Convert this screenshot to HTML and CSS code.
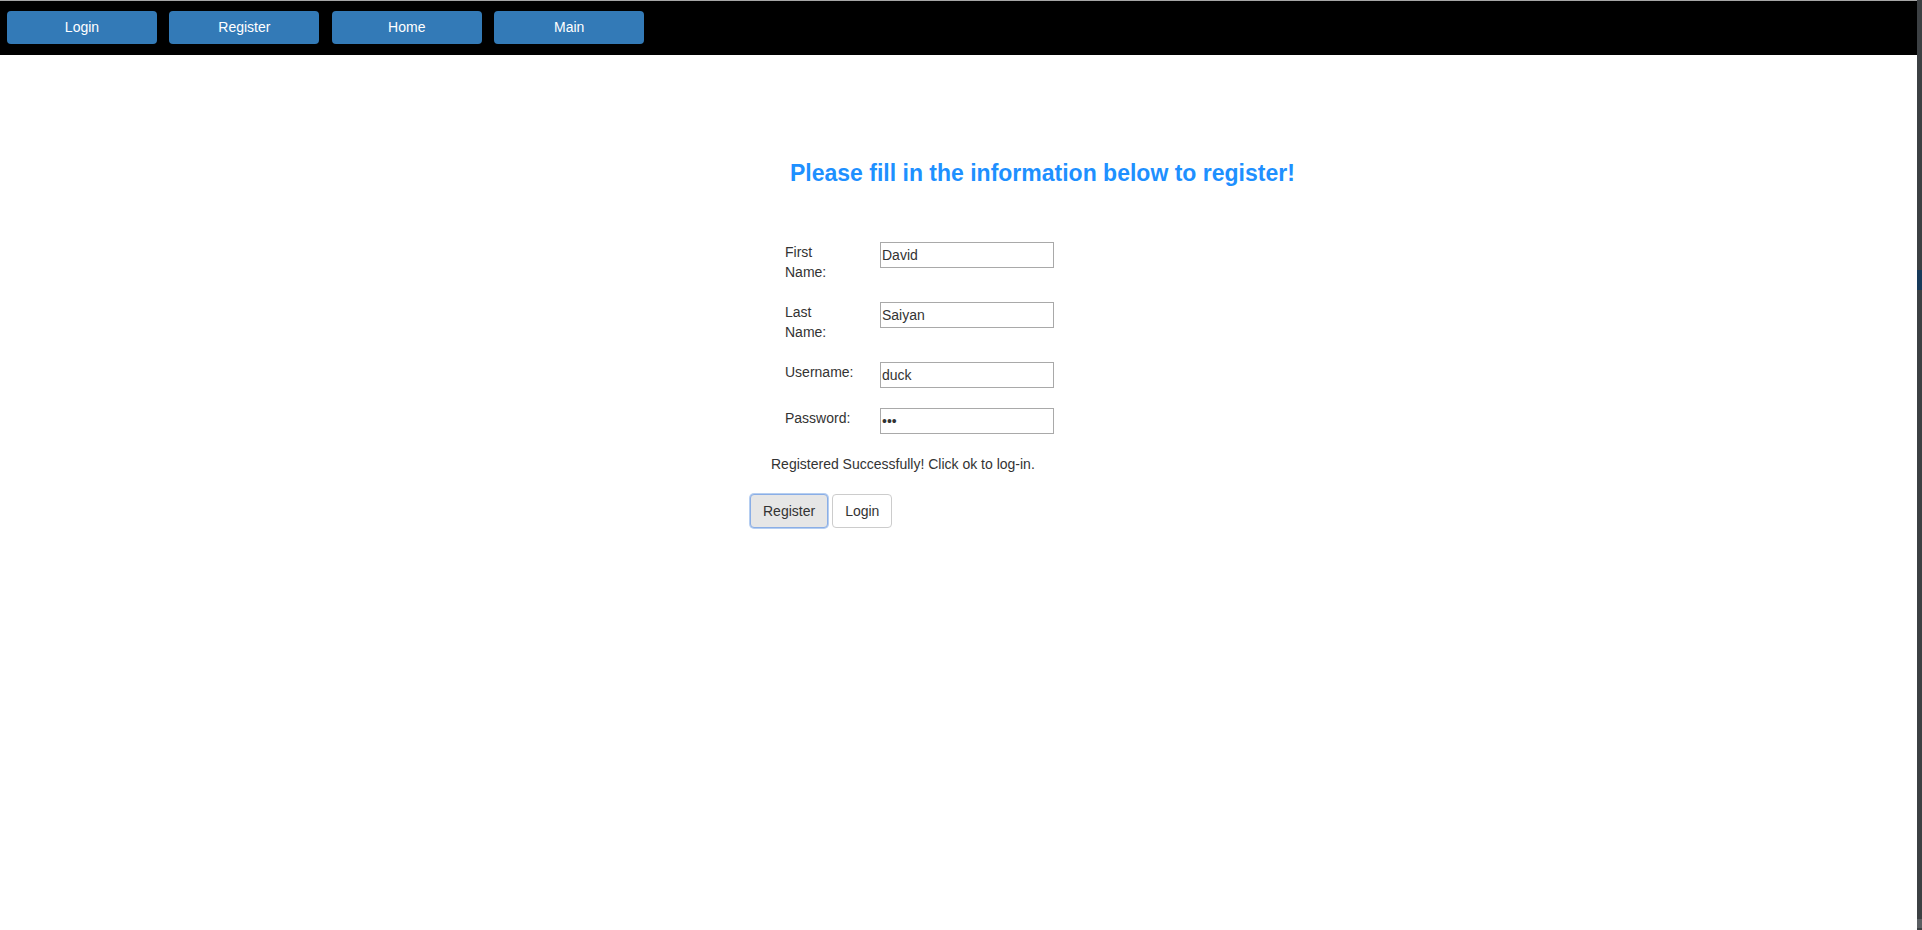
FILE: index.html
```html
<!DOCTYPE html>
<html>
<head>
<meta charset="utf-8">
<title>Register</title>
<link rel="stylesheet" href="styles.css">
</head>
<body>
<div class="page">
  <nav class="topnav">
    <a class="navbtn" href="#">Login</a>
    <a class="navbtn" href="#">Register</a>
    <a class="navbtn" href="#">Home</a>
    <a class="navbtn" href="#">Main</a>
  </nav>
  <main class="content">
    <h2 class="title">Please fill in the information below to register!</h2>
    <form class="form">
      <label class="lbl" for="fn">First Name:</label>
      <input class="field" id="fn" type="text" value="David">
      <label class="lbl" for="ln">Last Name:</label>
      <input class="field" id="ln" type="text" value="Saiyan">
      <label class="lbl" for="un">Username:</label>
      <input class="field" id="un" type="text" value="duck">
      <label class="lbl" for="pw">Password:</label>
      <input class="field" id="pw" type="password" value="abc">
    </form>
    <p class="msg">Registered Successfully! Click ok to log-in.</p>
    <div class="actions">
      <button class="btn btn-focus" type="button">Register</button>
      <button class="btn" type="button">Login</button>
    </div>
  </main>
</div>
<div class="edge">
  <div class="edge-top"></div>
  <div class="edge-blue"></div>
  <div class="edge-fill"></div>
  <div class="edge-end"></div>
</div>
</body>
</html>
```

FILE: styles.css
```css
html, body {
  margin: 0;
  padding: 0;
}
body {
  display: flex;
  height: 930px;
  overflow: hidden;
  background: #ffffff;
  font-family: "Liberation Sans", Arial, sans-serif;
  font-size: 14px;
  line-height: 20px;
  color: #333333;
}
.page {
  flex: 1;
  min-width: 0;
  border-top: 1px solid #a6a6a6;
}
.topnav {
  height: 54px;
  box-sizing: border-box;
  background: #000000;
  display: flex;
  align-items: flex-start;
  gap: 12.4px;
  padding: 10px 0 0 7px;
}
.navbtn {
  width: 150px;
  height: 33px;
  line-height: 33px;
  background: #337ab7;
  border-radius: 4px;
  color: #ffffff;
  text-align: center;
  text-decoration: none;
  font-size: 14px;
}
.content {
  display: flex;
  flex-direction: column;
  align-items: flex-start;
  padding-left: 750px;
}
.title {
  margin: 105px 0 0 40px;
  font-size: 23px;
  line-height: 26px;
  font-weight: bold;
  color: #1e90ff;
}
.form {
  margin: 56px 0 0 35px;
  display: grid;
  grid-template-columns: 70px 174px;
  column-gap: 25px;
  row-gap: 20px;
  align-items: start;
}
.lbl {
  line-height: 20px;
}
.field {
  box-sizing: border-box;
  width: 174px;
  height: 26px;
  border: 1px solid #a9a9a9;
  padding: 0 1px;
  margin: 0;
  font-family: "Liberation Sans", Arial, sans-serif;
  font-size: 14px;
  color: #333333;
  background: #ffffff;
  outline: none;
}
.msg {
  margin: 20px 0 0 21px;
  line-height: 20px;
}
.actions {
  margin-top: 20px;
  display: flex;
  gap: 4px;
}
.btn {
  box-sizing: border-box;
  height: 34px;
  padding: 6px 12px;
  font-family: "Liberation Sans", Arial, sans-serif;
  font-size: 14px;
  line-height: 20px;
  color: #333333;
  background: #ffffff;
  border: 1px solid #cccccc;
  border-radius: 4px;
}
.btn-focus {
  background: #e6e6e6;
  border-color: #8aaee6;
  box-shadow: 0 0 0 1px rgba(120, 165, 230, 0.55);
}
.edge {
  width: 5px;
  display: flex;
  flex-direction: column;
  background: #3c4043;
}
.edge-top {
  height: 270px;
}
.edge-blue {
  height: 20px;
  background: #173a5a;
}
.edge-fill {
  flex: 1;
}
.edge-end {
  height: 9px;
  background: #5a5e62;
  margin-bottom: 2px;
}
```
